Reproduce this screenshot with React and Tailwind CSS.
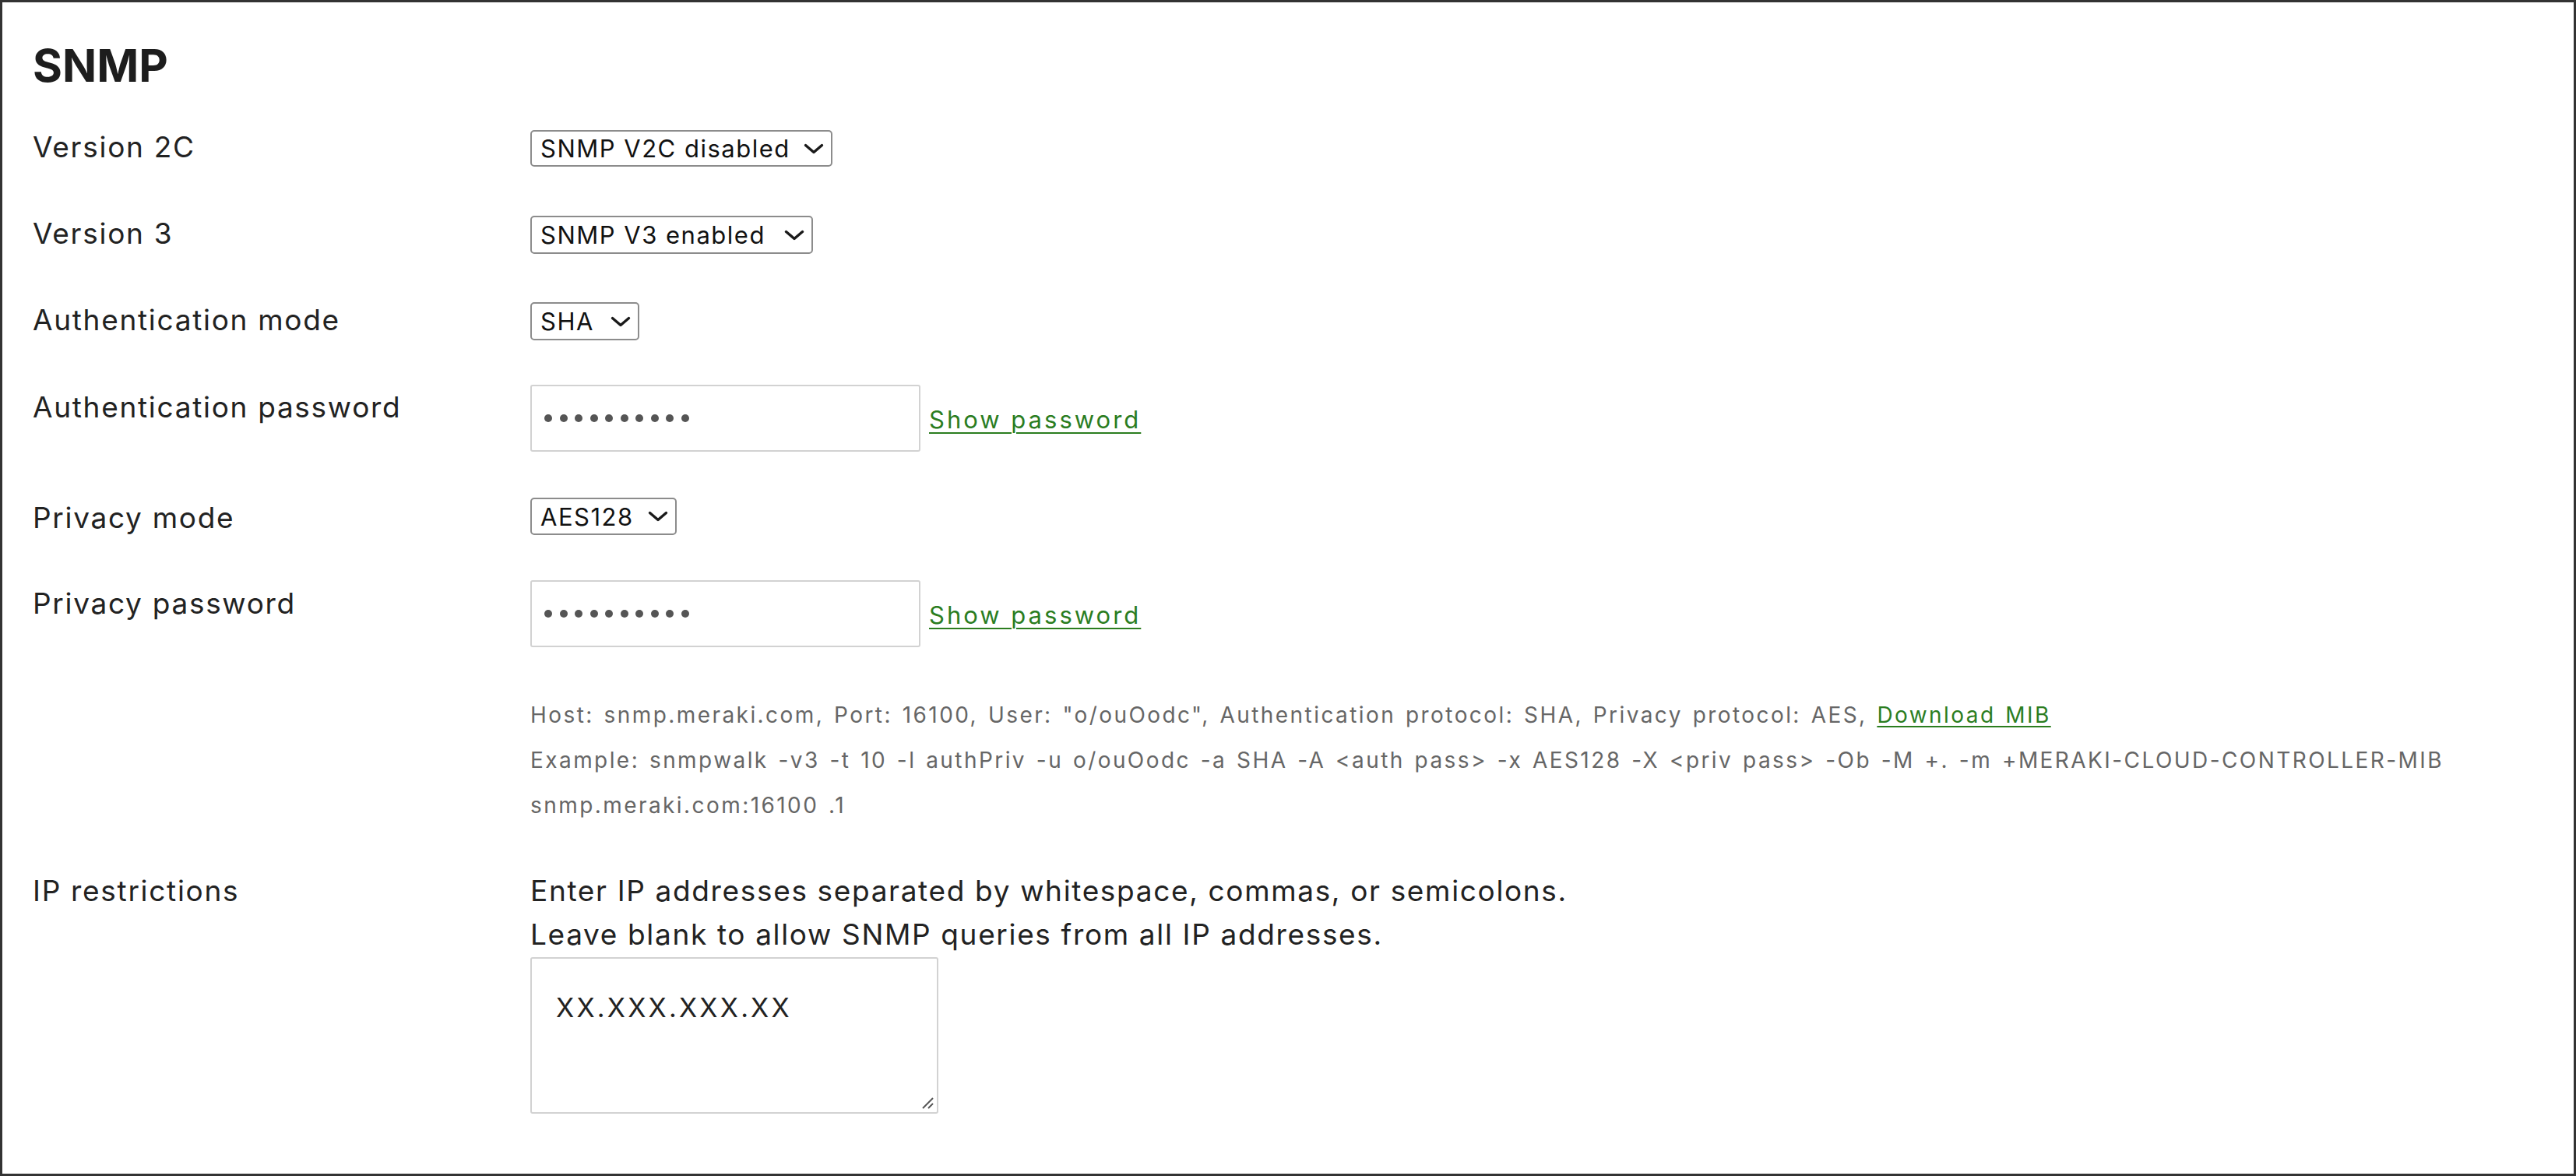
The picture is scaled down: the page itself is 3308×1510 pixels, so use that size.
import React from "react";

function Chevron() {
  return (
    <svg className="ml-[14px] w-[26px] h-[14px] shrink-0" viewBox="0 0 26 14" fill="none">
      <polyline points="2.5,2.5 13,11.5 23.5,2.5" stroke="#1a1a1a" strokeWidth="3.4" strokeLinecap="round" strokeLinejoin="round" />
    </svg>
  );
}

function FakeSelect({ label, className = "" }) {
  return (
    <div
      className={
        "inline-flex items-center justify-between border-2 border-[#8c8c8c] rounded-[5px] pl-[11px] pr-[9px] text-[31px] tracking-[1.5px] leading-none text-[#111] bg-white whitespace-nowrap " +
        className
      }
    >
      <span>{label}</span>
      <Chevron />
    </div>
  );
}

function PasswordBox() {
  return (
    <div className="flex items-center">
      <div className="w-[501px] h-[86px] border-2 border-[#d2d2d2] rounded-[3px] bg-white flex items-center pl-[16px] gap-[9.5px]">
        {Array.from({ length: 10 }).map((_, i) => (
          <span key={i} className="block w-[10px] h-[10px] rounded-full bg-[#555]" />
        ))}
      </div>
      <a
        href="#"
        className="ml-[11px] mt-[4px] text-[31px] tracking-[3px] leading-[48px] text-[#2b7d1f] underline decoration-2 underline-offset-[5px]"
      >
        Show password
      </a>
    </div>
  );
}

const labelCls = "w-[639px] shrink-0 text-[37px] tracking-[1.7px] leading-[48px] text-[#222]";

export default function App() {
  return (
    <div className="w-[3308px] h-[1510px] border-[3px] border-[#333] bg-white pl-[39px] font-['Inter','Noto_Sans',sans-serif] text-[#222] overflow-hidden">
      <h1 className="mt-[46px] text-[58px] leading-[70px] font-bold text-[#1d1d1d]">SNMP</h1>

      {/* Version 2C */}
      <div className="mt-[46px] flex items-start">
        <div className={labelCls}>Version 2C</div>
        <FakeSelect label="SNMP V2C disabled" className="mt-[2px] h-[47px] w-[388px]" />
      </div>

      {/* Version 3 */}
      <div className="mt-[62px] flex items-start">
        <div className={labelCls}>Version 3</div>
        <FakeSelect label="SNMP V3 enabled" className="mt-[1px] h-[49px] w-[363px]" />
      </div>

      {/* Authentication mode */}
      <div className="mt-[61px] flex items-start">
        <div className={labelCls}>Authentication mode</div>
        <FakeSelect label="SHA" className="mt-[1px] h-[49px] w-[140px]" />
      </div>

      {/* Authentication password */}
      <div className="mt-[57px] flex items-start">
        <div className={labelCls + " mt-[5px]"}>Authentication password</div>
        <PasswordBox />
      </div>

      {/* Privacy mode */}
      <div className="mt-[59px] flex items-start">
        <div className={labelCls + " mt-[2px]"}>Privacy mode</div>
        <FakeSelect label="AES128" className="h-[48px] w-[188px]" />
      </div>

      {/* Privacy password */}
      <div className="mt-[56px] flex items-start">
        <div className={labelCls + " mt-[6px]"}>Privacy password</div>
        <PasswordBox />
      </div>

      {/* Info */}
      <div className="mt-[58px] flex items-start">
        <div className="w-[639px] shrink-0" />
        <div className="text-[28px] tracking-[2.43px] [word-spacing:2.5px] leading-[58px] text-[#666] whitespace-nowrap">
          <div>
            Host: snmp.meraki.com, Port: 16100, User: "o/ouOodc", Authentication protocol: SHA, Privacy protocol: AES,{" "}
            <a href="#" className="text-[#2b7d1f] underline decoration-2 underline-offset-[4px]">
              Download MIB
            </a>
          </div>
          <div>
            Example: snmpwalk -v3 -t 10 -l authPriv -u o/ouOodc -a SHA -A &lt;auth pass&gt; -x AES128 -X &lt;priv pass&gt; -Ob -M +. -m +MERAKI-CLOUD-CONTROLLER-MIB
          </div>
          <div>snmp.meraki.com:16100 .1</div>
        </div>
      </div>

      {/* IP restrictions */}
      <div className="mt-[53px] flex items-start">
        <div className="w-[639px] shrink-0 text-[37px] tracking-[1.7px] leading-[56px] text-[#222]">IP restrictions</div>
        <div className="flex flex-col">
          <div className="text-[37px] tracking-[1.65px] leading-[56px] text-[#222] whitespace-nowrap">
            <div>Enter IP addresses separated by whitespace, commas, or semicolons.</div>
            <div>Leave blank to allow SNMP queries from all IP addresses.</div>
          </div>
          <div className="relative mt-[1px] w-[524px] h-[201px] border-2 border-[#d2d2d2] rounded-[3px] bg-white pl-[31px] pt-[42px]">
            <div className="text-[34px] leading-[42px] text-[#222] tracking-[3.2px]">XX.XXX.XXX.XX</div>
            <svg className="absolute right-[3px] bottom-[3px] w-[18px] h-[18px]" viewBox="0 0 18 18" fill="none">
              <line x1="16" y1="3" x2="3" y2="16" stroke="#555" strokeWidth="2" />
              <line x1="16" y1="10" x2="10" y2="16" stroke="#555" strokeWidth="2" />
            </svg>
          </div>
        </div>
      </div>
    </div>
  );
}
